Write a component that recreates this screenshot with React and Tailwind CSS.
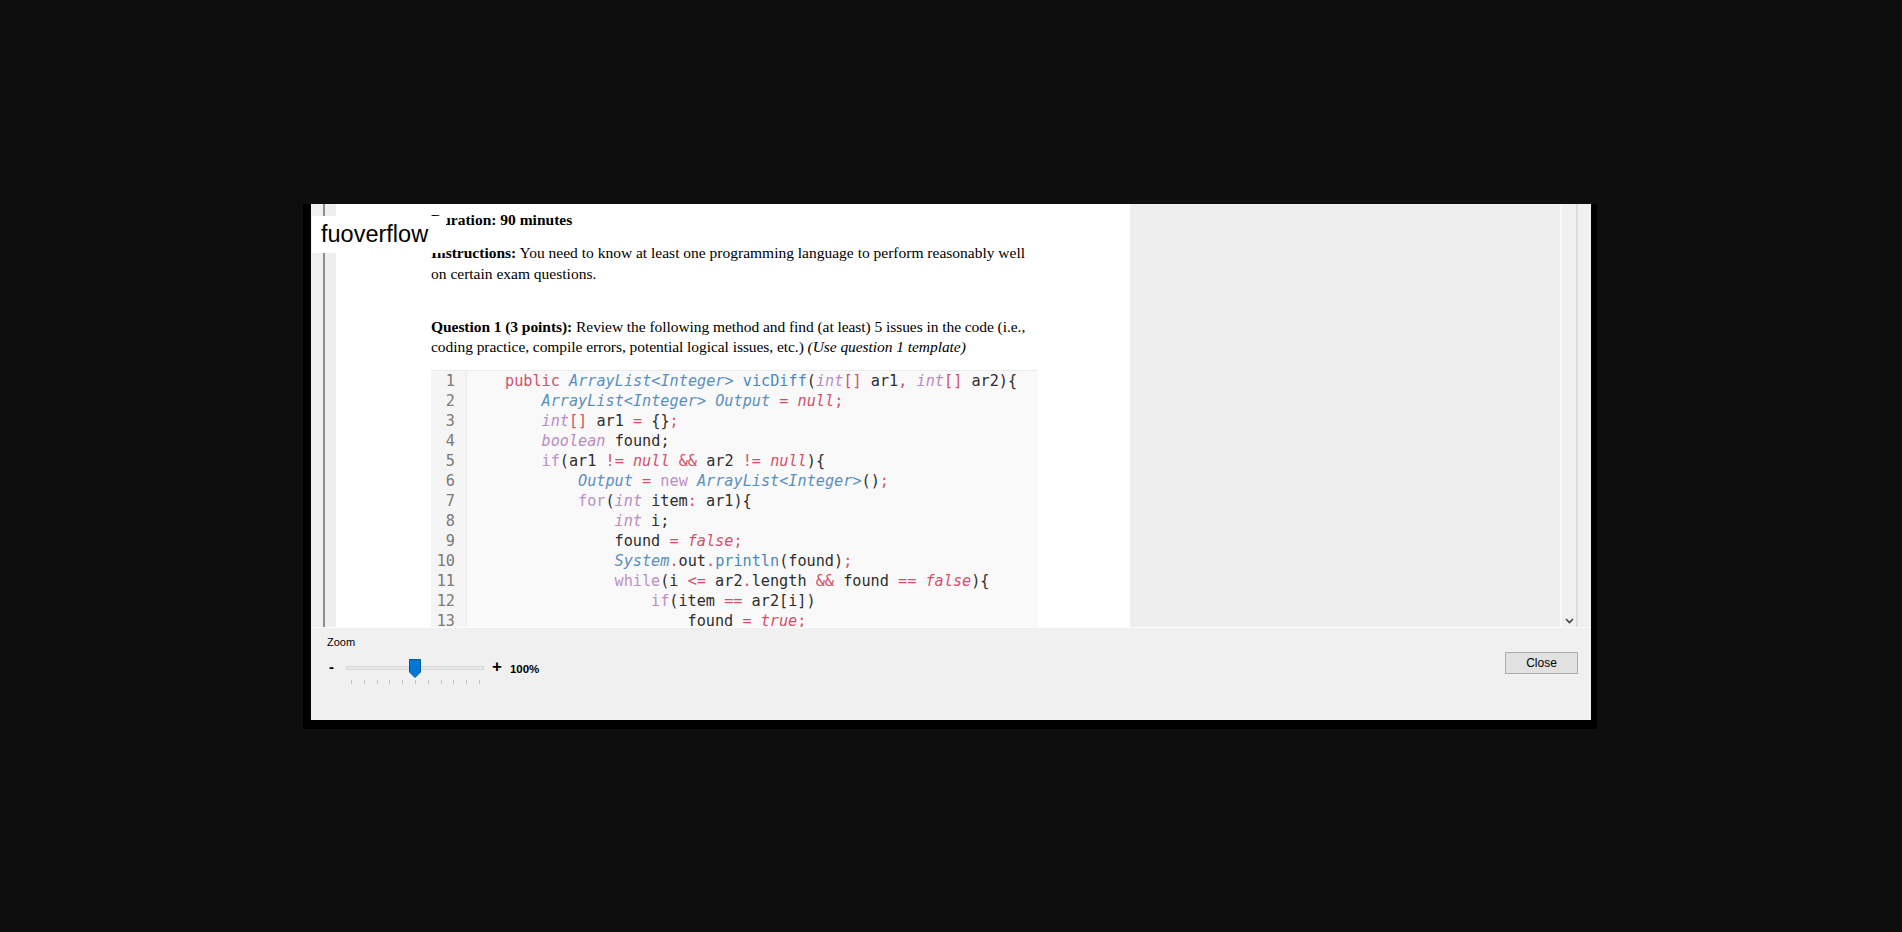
const R = "text-[#d4506a]";
const RI = "text-[#d4506a] italic";
const B = "text-[#5b8fbd] italic";
const BN = "text-[#4d88b9]";
const P = "text-[#b98cc2] italic";
const PN = "text-[#bd8fc6]";
const D = "text-[#2e2e2e]";

const code = [
  [0, [[R, "public"], [D, " "], [B, "ArrayList<Integer>"], [D, " "], [BN, "vicDiff"], [D, "("], [P, "int"], [R, "[]"], [D, " ar1"], [R, ", "], [P, "int"], [R, "[]"], [D, " ar2){"]]],
  [1, [[B, "ArrayList<Integer> Output"], [D, " "], [R, "="], [D, " "], [RI, "null"], [R, ";"]]],
  [1, [[P, "int"], [R, "[]"], [D, " ar1 "], [R, "="], [D, " {}"], [R, ";"]]],
  [1, [[P, "boolean"], [D, " found;"]]],
  [1, [[PN, "if"], [D, "(ar1 "], [R, "!="], [D, " "], [RI, "null"], [D, " "], [R, "&&"], [D, " ar2 "], [R, "!="], [D, " "], [RI, "null"], [D, "){"]]],
  [2, [[B, "Output"], [D, " "], [R, "="], [D, " "], [PN, "new"], [D, " "], [B, "ArrayList<Integer>"], [D, "()"], [R, ";"]]],
  [2, [[PN, "for"], [D, "("], [P, "int"], [D, " item"], [R, ":"], [D, " ar1){"]]],
  [3, [[P, "int"], [D, " i;"]]],
  [3, [[D, "found "], [R, "="], [D, " "], [RI, "false"], [R, ";"]]],
  [3, [[B, "System"], [R, "."], [D, "out"], [R, "."], [BN, "println"], [D, "(found)"], [R, ";"]]],
  [3, [[PN, "while"], [D, "(i "], [R, "<="], [D, " ar2"], [R, "."], [D, "length "], [R, "&&"], [D, " found "], [R, "=="], [D, " "], [RI, "false"], [D, "){"]]],
  [4, [[PN, "if"], [D, "(item "], [R, "=="], [D, " ar2[i])"]]],
  [5, [[D, "found "], [R, "="], [D, " "], [RI, "true"], [R, ";"]]],
];

const indents = ["pl-0", "pl-[36.5px]", "pl-[73px]", "pl-[109.5px]", "pl-[146px]", "pl-[182.5px]"];

function CodeBlock() {
  return (
    <div className="mt-[12px] w-[607px] bg-[#f9f9f9] border-t border-[#ececec] flex font-['DejaVu_Sans_Mono',monospace] text-[15.2px] leading-[20px]">
      <div className="w-[36px] bg-[#f5f5f5] border-r border-[#ebebeb] text-right pr-[11px] text-[#7a7a7a] shrink-0">
        {code.map((_, i) => (
          <div key={i} className="h-[20px]">{i + 1}</div>
        ))}
      </div>
      <div className="pl-[38px] whitespace-pre">
        {code.map(([lvl, toks], i) => (
          <div key={i} className={`h-[20px] ${indents[lvl]}`}>
            {toks.map(([c, t], j) => (
              <span key={j} className={c}>{t}</span>
            ))}
          </div>
        ))}
      </div>
    </div>
  );
}

function Slider() {
  const ticks = Array.from({ length: 11 });
  return (
    <div className="relative w-[138px] h-[26px]">
      <div className="absolute left-0 right-0 top-[8px] h-[4px] bg-[#e7e7e7] border border-[#d9d9d9]" />
      <svg className="absolute left-[63px] top-[1px]" width="12" height="19" viewBox="0 0 12 19">
        <path d="M0.5 0.5 H11.5 V13 L6 18.5 L0.5 13 Z" fill="#0078d7" stroke="#005a9e" strokeWidth="1" />
      </svg>
      <div className="absolute left-[5px] top-[22px] w-[129px] flex justify-between">
        {ticks.map((_, i) => (
          <div key={i} className="w-px h-[4px] bg-[#c2c2c2]" />
        ))}
      </div>
    </div>
  );
}

export default function App() {
  return (
    <div className="w-[1902px] h-[932px] bg-[#0e0e0e] overflow-hidden pt-[204px] pl-[303px]">
      <div className="w-[1294px] h-[525px] bg-black pl-[8px] pr-[6px] pb-[9px]">
        <div className="relative w-full h-full bg-[#f0f0f0] flex flex-col">
          {/* viewer */}
          <div className="h-[424px] flex border-b border-[#fbfbfb]">
            <div className="w-[12px] shrink-0" />
            <div className="w-[2px] bg-[#8e8e8e] shrink-0" />
            <div className="w-[1235px] shrink-0 bg-[#eeeeee] pl-[11px] overflow-hidden">
              <div className="w-[794px] h-full bg-white overflow-hidden pl-[95px] pt-[6px] text-black font-['Liberation_Serif',serif] text-[15.5px] leading-[20.6px]">
                <p className="whitespace-nowrap"><b>Duration: 90 minutes</b></p>
                <p className="mt-[12.5px] whitespace-nowrap">
                  <b>Instructions:</b> You need to know at least one programming language to perform reasonably well
                  <br />on certain exam questions.
                </p>
                <p className="mt-[32.5px] whitespace-nowrap tracking-[-0.06px]">
                  <b>Question 1 (3 points):</b> Review the following method and find (at least) 5 issues in the code (i.e.,
                  <br />coding practice, compile errors, potential logical issues, etc.) <i>(Use question 1 template)</i>
                </p>
                <CodeBlock />
              </div>
            </div>
            <div className="w-[18px] shrink-0 flex flex-col justify-end items-center border-l-2 border-r-2 border-l-[#f9f9f9] border-r-[#dcdcdc] bg-[#f0f0f0] pb-[3px]">
              <svg width="9" height="6" viewBox="0 0 9 6">
                <path d="M1 1 L4.5 4.5 L8 1" fill="none" stroke="#444" strokeWidth="1.6" />
              </svg>
            </div>
            <div className="w-[13px] shrink-0" />
          </div>

          {/* bottom controls */}
          <div className="flex-1 flex justify-between pl-[16px] pr-[13px] font-['Liberation_Sans',sans-serif] text-black">
            <div className="flex flex-col">
              <div className="text-[11px] leading-[14px] mt-[7px]">Zoom</div>
              <div className="flex items-start mt-[9px] ml-[2px]">
                <span className="text-[15px] leading-[18px] font-bold w-[17px]">-</span>
                <Slider />
                <span className="text-[17px] leading-[18px] font-bold ml-[8px]">+</span>
                <span className="text-[11.5px] leading-[18px] font-bold ml-[8px] mt-[2px]">100%</span>
              </div>
            </div>
            <button className="mt-[24px] w-[73px] h-[22px] bg-[#e1e1e1] border border-[#adadad] text-[12px] leading-[20px] text-black">
              Close
            </button>
          </div>

          {/* watermark */}
          <div className="absolute left-[1px] top-[12px] w-[134px] h-[37px] bg-white pl-[9px] font-['Liberation_Sans',sans-serif] text-[23.5px] leading-[37px] text-black">
            fuoverflow
          </div>
        </div>
      </div>
    </div>
  );
}
